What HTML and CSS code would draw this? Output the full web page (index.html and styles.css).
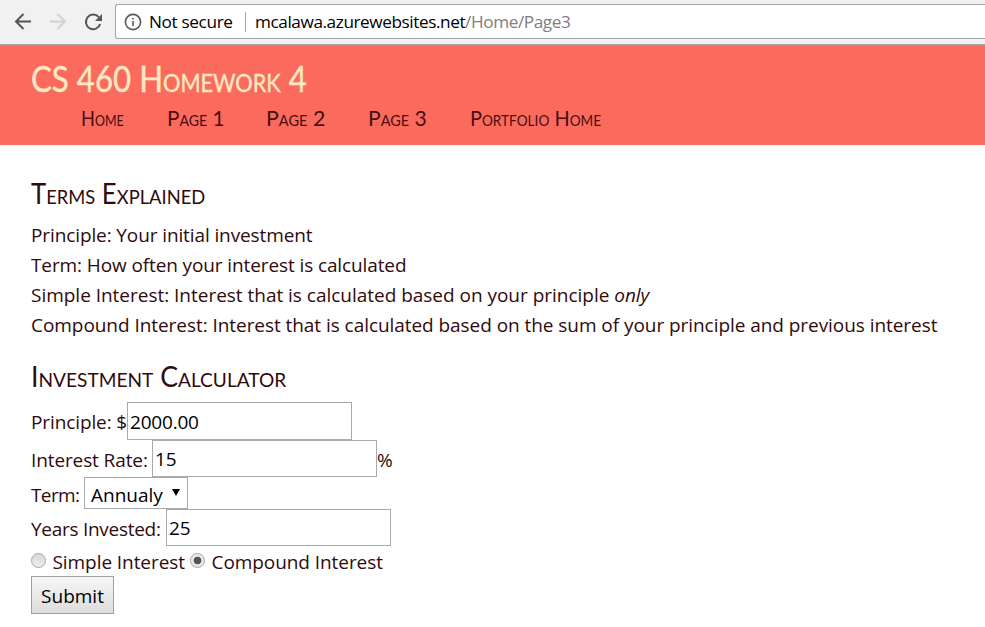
FILE: index.html
```
<!DOCTYPE html>
<html lang="en">
<head>
<meta charset="utf-8">
<title>CS 460 Homework 4</title>
<link rel="stylesheet" href="styles.css">
</head>
<body>
<div class="browser">
  <svg class="nav-icons" width="115" height="44" viewBox="0 0 115 44" fill="none" stroke-width="2">
    <path d="M31 21.500H16.500M23.500 14L16 21.500L23.500 29" stroke="#555"/>
    <path d="M50 21.500H64.500M57.500 14L65 21.500L57.500 29" stroke="#d2d2d2"/>
    <path d="M98.800 17.200A7.300 7.300 0 1 0 100.200 24" stroke="#555"/>
    <path d="M102 14V21H95Z" fill="#555"/>
  </svg>
  <div class="address">
    <svg class="info" width="18" height="18" viewBox="0 0 18 18"><circle cx="9" cy="9" r="7.600" fill="none" stroke="#5a5a5a" stroke-width="1.600"/><path d="M8.200 8h1.600v5H8.200zM8.200 5h1.600v1.600H8.200z" fill="#5a5a5a"/></svg>
    <span class="secure">Not secure</span>
    <span class="url">mcalawa.azurewebsites.net<span class="path">/Home/Page3</span></span>
  </div>
</div>
<header>
  <h1><span>CS 460 Homework 4</span></h1>
  <nav><a class="home">Home</a><a class="page1">Page 1</a><a class="page2">Page 2</a><a class="page3">Page 3</a><a class="portfolio">Portfolio Home</a></nav>
</header>
<main>
  <h2 class="terms-title"><span>Terms Explained</span></h2>
  <p class="short">Principle: Your initial investment</p>
  <p class="short">Term: How often your interest is calculated</p>
  <p class="simple-def">Simple Interest: Interest that is calculated based on your principle <em>only</em></p>
  <p>Compound Interest: Interest that is calculated based on the sum of your principle and previous interest</p>
  <h2 class="calc-title"><span>Investment Calculator</span></h2>
  <form>
    <div class="row principle"><label>Principle: $</label><input type="text" value="2000.00"></div>
    <div class="row rate"><label>Interest Rate:</label><input type="text" value="15"><span>%</span></div>
    <div class="row term"><label>Term:</label><div class="select">Annualy<i></i></div></div>
    <div class="row years"><label>Years Invested:</label><input type="text" value="25"></div>
    <div class="row radios"><i class="radio"></i><label class="simple">Simple Interest</label><i class="radio on"></i><label>Compound Interest</label></div>
    <button type="button">Submit</button>
  </form>
</main>
</body>
</html>
```
FILE: styles.css
```
* { box-sizing: border-box; }
body { margin: 0; background: #fff; color: #300a0c; font: 400 19px/30px "Open Sans", sans-serif; }
.browser { display: flex; height: 45px; background: #f1f1f1; border-bottom: 1px solid #a9a9a9; }
.nav-icons { flex: none; }
.address { display: flex; align-items: center; flex: 1; height: 35px; margin-top: 4px; padding-left: 8px; background: #fff; border: 1px solid #a6a6a6; border-right: 0; border-radius: 3px 0 0 3px; font-size: 17.200px; color: #000; white-space: nowrap; }
.info { flex: none; margin-right: 7px; }
.secure { width: 97px; height: 20px; line-height: 19px; border-right: 1px solid #a6a6a6; letter-spacing: -0.350px; }
.url { margin-left: 9px; letter-spacing: -0.420px; }
.path { color: #808080; }
header { height: 100px; padding: 12px 31px 0; background: #fa6b5d; }
h1, h2, nav { font-family: Lato, sans-serif; font-variant: small-caps; font-weight: 400; white-space: nowrap; }
h1 span, h2 span, nav a { display: inline-block; transform-origin: left; }
h1 { margin: 0; font-size: 36px; line-height: 42px; color: #ffe8c2; -webkit-text-stroke: 0.400px currentColor; }
h1 span { transform: scaleX(.868); }
nav { display: flex; padding-left: 50px; font-size: 22px; line-height: 38px; color: #4a0d12; }
.home { width: 86px; transform: scaleX(.83); }
.page1 { width: 99px; transform: scaleX(.94); }
.page2 { width: 102px; transform: scaleX(.97); }
.page3 { width: 102px; transform: scaleX(.96); }
.portfolio { transform: scaleX(.907); }
main { padding: 30px 31px 0; }
h2 { margin: 0; font-size: 28px; line-height: 36px; }
.terms-title { margin-bottom: 9px; }
.terms-title span { transform: scaleX(.918); }
.calc-title { margin: 18px 0 8px; }
.calc-title span { transform: scaleX(.955); }
p { margin: 0; white-space: nowrap; letter-spacing: -0.055px; }
.short { letter-spacing: -0.110px; }
.simple-def { letter-spacing: -0.020px; }
.row { display: flex; align-items: center; white-space: nowrap; }
label { flex: none; padding-top: 1px; letter-spacing: -0.110px; }
.principle { height: 38px; }
.principle label { width: 96px; padding-top: 2px; }
.rate { height: 37px; }
.rate span { padding-top: 2px; }
.rate label { width: 121px; padding-top: 2px; }
.term { height: 32px; padding-top: 2px; }
.term label { width: 53px; padding-top: 2px; letter-spacing: -0.600px; }
.years { height: 37px; }
.years label { width: 135px; padding-top: 2px; letter-spacing: -0.280px; }
.radios { height: 30px; }
.radios label { padding: 2px 0 0 6.500px; letter-spacing: -0.070px; }
.radios .simple { width: 144px; }
input { width: 225px; height: 100%; padding: 2px 2px 1px; border: 1px solid #a9a9a9; background: #fff; color: #000; font: inherit; letter-spacing: -0.200px; }
.select { display: flex; align-items: center; width: 104px; height: 32px; margin-top: -2px; padding: 4px 0 0 6px; border: 1px solid #a9a9a9; color: #000; }
.select i { margin: -6px 0 0 9px; border: 4px solid transparent; border-top: 7px solid #000; border-bottom: 0; }
.radio { flex: none; width: 15px; height: 15px; margin-top: -1px; border: 1px solid #a5a5a5; border-radius: 50%; background: linear-gradient(#d8d8d8, #eee); }
.on { background: radial-gradient(circle, #555 0 3.500px, #e8e8e8 4.200px); }
button { display: block; width: 83px; height: 38px; padding: 1px 0 0; border: 1px solid #a0a0a0; background: linear-gradient(#f6f6f6, #ddd); color: #000; font: inherit; }
```
